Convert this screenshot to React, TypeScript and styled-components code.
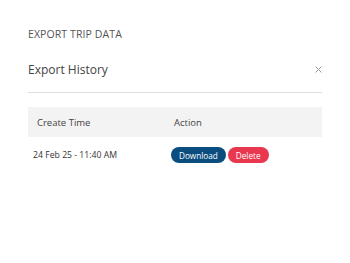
import React from "react";
import styled, { createGlobalStyle } from "styled-components";

const GlobalStyle = createGlobalStyle`
  body {
    margin: 0;
    background: #ffffff;
    font-family: "Open Sans", "Noto Sans", sans-serif;
  }
`;

type ExportRow = {
  id: number;
  createdAt: string;
};

const rows: ExportRow[] = [{ id: 1, createdAt: "24 Feb 25 - 11:40 AM" }];

const App: React.FC = () => {
  return (
    <>
      <GlobalStyle />
      <Page>
        <PageTitle>EXPORT TRIP DATA</PageTitle>
        <Panel>
          <PanelHeader>
            <PanelTitle>Export History</PanelTitle>
            <CloseButton aria-label="close">
              <svg width="7" height="7" viewBox="0 0 7 7">
                <path d="M0.5 0.5 L6.5 6.5 M6.5 0.5 L0.5 6.5" stroke="#9a9a9a" strokeWidth="1" />
              </svg>
            </CloseButton>
          </PanelHeader>
          <Table>
            <HeadRow>
              <TimeCell>Create Time</TimeCell>
              <ActionCell>Action</ActionCell>
            </HeadRow>
            {rows.map((row) => (
              <BodyRow key={row.id}>
                <DateCell>{row.createdAt}</DateCell>
                <ButtonCell>
                  <PillButton $tone="primary">Download</PillButton>
                  <PillButton $tone="danger">Delete</PillButton>
                </ButtonCell>
              </BodyRow>
            ))}
          </Table>
        </Panel>
      </Page>
    </>
  );
};

export default App;

const Page = styled.div`
  padding: 27px 28px 0 28px;
  width: 294px;
`;

const PageTitle = styled.div`
  font-size: 10.5px;
  color: #555555;
  line-height: 14px;
  letter-spacing: 0.1px;
`;

const Panel = styled.div`
  margin-top: 13px;
`;

const PanelHeader = styled.div`
  display: flex;
  align-items: center;
  justify-content: space-between;
  height: 30px;
  padding-bottom: 8px;
  border-bottom: 1px solid #dedede;
`;

const PanelTitle = styled.div`
  font-size: 12px;
  color: #444444;
`;

const CloseButton = styled.button`
  border: none;
  background: none;
  padding: 0;
  display: flex;
  cursor: pointer;
`;

const Table = styled.div`
  margin-top: 14px;
`;

const HeadRow = styled.div`
  display: flex;
  align-items: center;
  height: 30px;
  background: #f3f3f3;
`;

const TimeCell = styled.div`
  width: 137px;
  padding-left: 9px;
  font-size: 9.5px;
  color: #444444;
`;

const ActionCell = styled.div`
  font-size: 9.5px;
  color: #444444;
`;

const BodyRow = styled.div`
  display: flex;
  align-items: center;
  height: 36px;
`;

const DateCell = styled.div`
  width: 138px;
  padding-left: 5px;
  font-size: 8.7px;
  color: #333333;
`;

const ButtonCell = styled.div`
  display: flex;
  gap: 2px;
`;

const PillButton = styled.button<{ $tone: "primary" | "danger" }>`
  height: 16px;
  padding: 0 8px;
  border: none;
  border-radius: 8px;
  font-family: inherit;
  font-size: 8.2px;
  color: #ffffff;
  background: ${(p) => (p.$tone === "primary" ? "#0b4d7e" : "#e8374e")};
  cursor: pointer;
`;
